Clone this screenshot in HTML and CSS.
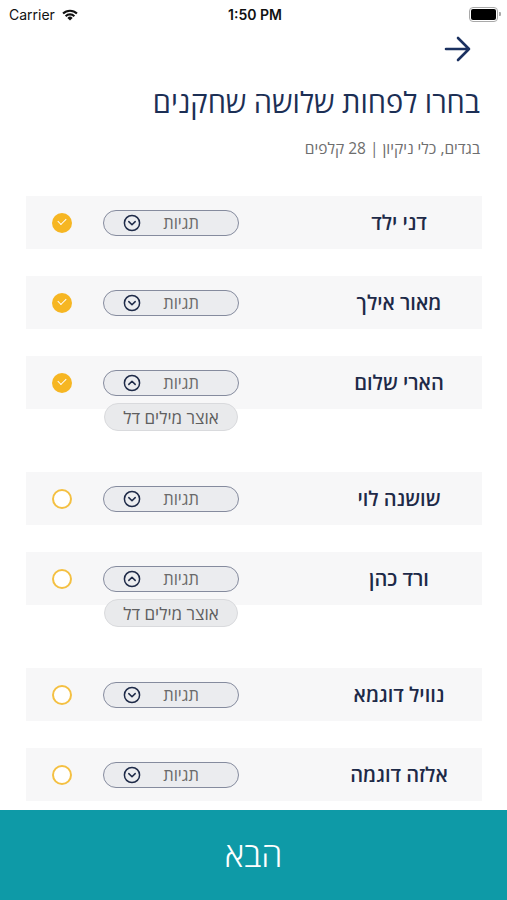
FILE: index.html
```html
<!DOCTYPE html>
<html lang="he">
<head>
    <meta charset="UTF-8">
    <meta name="viewport" content="width=device-width, initial-scale=1.0">
    <title>בחירת שחקנים</title>
    <link rel="stylesheet" href="styles.css">
</head>
<body>
    <div class="pagina">
        <!-- Barra di stato -->
        <div class="status">
            <div class="status-left">
                <span>Carrier</span>
                <svg width="18" height="13" viewBox="0 0 18 13">
                    <path d="M9 12.6 6.4 9.9a3.7 3.7 0 0 1 5.2 0z" fill="#111"/>
                    <path d="M3.9 7.4a7.3 7.3 0 0 1 10.2 0l-1.5 1.5a5.2 5.2 0 0 0-7.2 0z" fill="#111"/>
                    <path d="M1.3 4.8a11 11 0 0 1 15.4 0l-1.5 1.5a8.9 8.9 0 0 0-12.4 0z" fill="#111"/>
                </svg>
            </div>
            <div class="status-time">1:50 PM</div>
            <div class="status-right">
                <div class="batteria"><div class="carica"></div></div>
                <div class="batteria-punta"></div>
            </div>
        </div>

        <main dir="rtl">
            <!-- Navigazione -->
            <div class="nav">
                <svg width="28" height="28" viewBox="0 0 28 28">
                    <path d="M2 14h23M14 3l11 11-11 11" fill="none" stroke="#1b3160" stroke-width="2.6" stroke-linecap="round" stroke-linejoin="round"/>
                </svg>
            </div>

            <h1 class="titolo">בחרו לפחות שלושה שחקנים</h1>
            <p class="sottotitolo">בגדים, כלי ניקיון | 28 קלפים</p>

            <!-- Lista giocatori -->
            <div class="lista">
                <div class="giocatore">
                    <div class="riga">
                        <div class="nome">דני ילד</div>
                        <div class="etichette">
                            <span>תגיות</span>
                            <svg class="freccia" width="18" height="18" viewBox="0 0 18 18"><circle cx="9" cy="9" r="7.6" fill="none" stroke="#1e2a48" stroke-width="1.5"/><path d="M5.8 7.6 9 10.8l3.2-3.2" fill="none" stroke="#1e2a48" stroke-width="1.5" stroke-linecap="round" stroke-linejoin="round"/></svg>
                        </div>
                        <div class="spunta attiva"></div>
                    </div>
                </div>
                <div class="giocatore">
                    <div class="riga">
                        <div class="nome">מאור אילך</div>
                        <div class="etichette">
                            <span>תגיות</span>
                            <svg class="freccia" width="18" height="18" viewBox="0 0 18 18"><circle cx="9" cy="9" r="7.6" fill="none" stroke="#1e2a48" stroke-width="1.5"/><path d="M5.8 7.6 9 10.8l3.2-3.2" fill="none" stroke="#1e2a48" stroke-width="1.5" stroke-linecap="round" stroke-linejoin="round"/></svg>
                        </div>
                        <div class="spunta attiva"></div>
                    </div>
                </div>
                <div class="giocatore aperto">
                    <div class="riga">
                        <div class="nome">הארי שלום</div>
                        <div class="etichette">
                            <span>תגיות</span>
                            <svg class="freccia" width="18" height="18" viewBox="0 0 18 18"><circle cx="9" cy="9" r="7.6" fill="none" stroke="#1e2a48" stroke-width="1.5"/><path d="M5.8 10.4 9 7.2l3.2 3.2" fill="none" stroke="#1e2a48" stroke-width="1.5" stroke-linecap="round" stroke-linejoin="round"/></svg>
                        </div>
                        <div class="spunta attiva"></div>
                    </div>
                    <div class="menu-etichette"><span class="etichetta">אוצר מילים דל</span></div>
                </div>
                <div class="giocatore">
                    <div class="riga">
                        <div class="nome">שושנה לוי</div>
                        <div class="etichette">
                            <span>תגיות</span>
                            <svg class="freccia" width="18" height="18" viewBox="0 0 18 18"><circle cx="9" cy="9" r="7.6" fill="none" stroke="#1e2a48" stroke-width="1.5"/><path d="M5.8 7.6 9 10.8l3.2-3.2" fill="none" stroke="#1e2a48" stroke-width="1.5" stroke-linecap="round" stroke-linejoin="round"/></svg>
                        </div>
                        <div class="spunta"></div>
                    </div>
                </div>
                <div class="giocatore aperto">
                    <div class="riga">
                        <div class="nome">ורד כהן</div>
                        <div class="etichette">
                            <span>תגיות</span>
                            <svg class="freccia" width="18" height="18" viewBox="0 0 18 18"><circle cx="9" cy="9" r="7.6" fill="none" stroke="#1e2a48" stroke-width="1.5"/><path d="M5.8 10.4 9 7.2l3.2 3.2" fill="none" stroke="#1e2a48" stroke-width="1.5" stroke-linecap="round" stroke-linejoin="round"/></svg>
                        </div>
                        <div class="spunta"></div>
                    </div>
                    <div class="menu-etichette"><span class="etichetta">אוצר מילים דל</span></div>
                </div>
                <div class="giocatore">
                    <div class="riga">
                        <div class="nome">נוויל דוגמא</div>
                        <div class="etichette">
                            <span>תגיות</span>
                            <svg class="freccia" width="18" height="18" viewBox="0 0 18 18"><circle cx="9" cy="9" r="7.6" fill="none" stroke="#1e2a48" stroke-width="1.5"/><path d="M5.8 7.6 9 10.8l3.2-3.2" fill="none" stroke="#1e2a48" stroke-width="1.5" stroke-linecap="round" stroke-linejoin="round"/></svg>
                        </div>
                        <div class="spunta"></div>
                    </div>
                </div>
                <div class="giocatore">
                    <div class="riga">
                        <div class="nome">אלזה דוגמה</div>
                        <div class="etichette">
                            <span>תגיות</span>
                            <svg class="freccia" width="18" height="18" viewBox="0 0 18 18"><circle cx="9" cy="9" r="7.6" fill="none" stroke="#1e2a48" stroke-width="1.5"/><path d="M5.8 7.6 9 10.8l3.2-3.2" fill="none" stroke="#1e2a48" stroke-width="1.5" stroke-linecap="round" stroke-linejoin="round"/></svg>
                        </div>
                        <div class="spunta"></div>
                    </div>
                </div>
            </div>
        </main>

        <button class="avanti" dir="rtl">הבא</button>
    </div>
</body>
</html>
```

FILE: styles.css
```css
/* Stile globale */
body {
    margin: 0;
    padding: 0;
    background-color: white;
    font-family: "Open Sans", "Liberation Sans", sans-serif;
    color: #1e2a48;
}
.pagina {
    display: flex;
    flex-direction: column;
    height: 900px;
    overflow: hidden;
}
.pagina > * {
    flex-shrink: 0;
}

/* Barra di stato */
.status {
    display: flex;
    align-items: center;
    justify-content: space-between;
    height: 28px;
    padding: 0 6px 0 9px;
    font-family: "Inter", "Liberation Sans", sans-serif;
    font-size: 14px;
    color: #111;
}
.status-left {
    display: flex;
    align-items: center;
    gap: 6px;
    width: 100px;
}
.status-time {
    font-weight: 600;
    font-size: 14px;
}
.status-right {
    display: flex;
    align-items: center;
    justify-content: flex-end;
    width: 100px;
}
.batteria {
    width: 25px;
    height: 11px;
    border: 1px solid #a9a9a9;
    border-radius: 4px;
    padding: 1px;
}
.carica {
    width: 100%;
    height: 100%;
    background-color: #000;
    border-radius: 2px;
}
.batteria-punta {
    width: 2px;
    height: 4px;
    background-color: #a9a9a9;
    border-radius: 0 1px 1px 0;
    margin-left: 1px;
}

/* Intestazione */
main {
    padding: 0 25px 0 26px;
}
.nav {
    display: flex;
    justify-content: flex-end;
    flex-direction: row-reverse;
    padding: 7px 10px 0 0;
    height: 30px;
}
.titolo {
    margin: 18px 2px 0 0;
    font-size: 29px;
    font-weight: 400;
    color: #1c2f55;
    line-height: 38px;
}
.sottotitolo {
    margin: 16px 2px 0 0;
    font-size: 15.5px;
    color: #6e6e6e;
    line-height: 22px;
}

/* Lista giocatori */
.lista {
    margin-top: 37px;
}
.giocatore {
    margin-bottom: 27px;
}
.giocatore:last-child {
    margin-bottom: 0;
}
.riga {
    display: flex;
    align-items: center;
    height: 53px;
    background-color: #f7f7f8;
    padding-left: 26px;
}
.nome {
    width: 166px;
    text-align: center;
    font-size: 20px;
    font-weight: 600;
    color: #1e2a48;
}
.etichette {
    display: flex;
    align-items: center;
    gap: 22px;
    box-sizing: border-box;
    width: 136px;
    height: 26px;
    margin-right: 77px;
    padding-right: 39px;
    background-color: #ebecef;
    border: 1.5px solid #858b9e;
    border-radius: 13px;
    font-size: 16.5px;
    color: #6a6a6a;
}
.freccia {
    display: block;
}
.spunta {
    box-sizing: border-box;
    width: 20px;
    height: 20px;
    margin-right: 31px;
    border: 2px solid #f4c042;
    border-radius: 50%;
    background-color: white;
}
.spunta.attiva {
    border: none;
    background-color: #f6b623;
    position: relative;
}
.spunta.attiva::after {
    content: "";
    position: absolute;
    left: 6px;
    top: 5px;
    width: 7px;
    height: 4px;
    border-left: 1.6px solid white;
    border-bottom: 1.6px solid white;
    transform: rotate(-45deg);
}
.menu-etichette {
    width: 134px;
    margin: -6px 244px 0 0;
    padding-bottom: 14px;
}
.etichetta {
    display: flex;
    align-items: center;
    justify-content: center;
    box-sizing: border-box;
    height: 28px;
    background-color: #e9eaec;
    border: 1px solid #d9dadd;
    border-radius: 14px;
    font-size: 17px;
    color: #5f5f5f;
}

/* Pulsante */
.avanti {
    margin-top: auto;
    height: 90px;
    border: none;
    background-color: #0e9aa7;
    color: white;
    font-family: "Open Sans", "Liberation Sans", sans-serif;
    font-size: 34px;
    font-weight: 300;
    padding-bottom: 4px;
}
```
